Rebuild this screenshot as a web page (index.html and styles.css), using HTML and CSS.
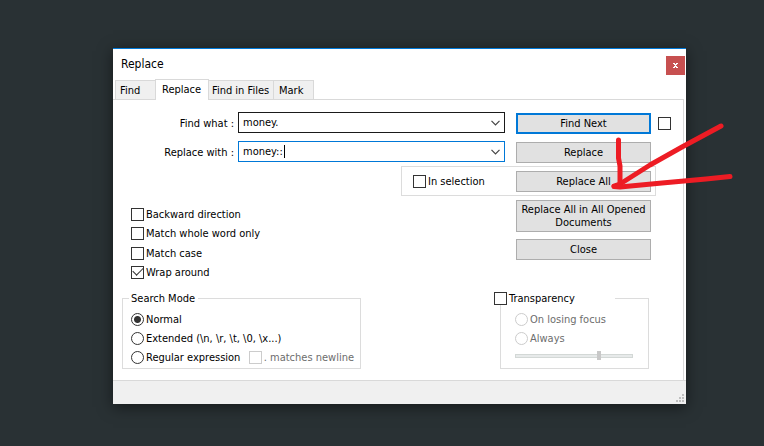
FILE: index.html
```html
<!DOCTYPE html>
<html lang="en">
<head>
    <meta charset="UTF-8">
    <meta name="viewport" content="width=device-width, initial-scale=1.0">
    <title>Replace</title>
    <link rel="stylesheet" href="styles.css">
</head>
<body>
    <main class="dialog">
        <header class="title-bar">
            <h1>Replace</h1>
            <button class="close-button" aria-label="Close window">
                <svg width="5" height="5" viewBox="0 0 5 5" fill="#fff"><path d="M0 0h2v1h1V0h2v1H4v1H3v1h1v1h1v1H3V4H2v1H0V4h1V3h1V2H1V1H0z"/></svg>
            </button>
        </header>

        <nav class="tabs">
            <button class="tab tab-find">Find</button>
            <button class="tab active">Replace</button>
            <button class="tab tab-files">Find in Files</button>
            <button class="tab tab-mark">Mark</button>
        </nav>

        <form class="panel">
            <div class="row">
                <label class="field-label" for="findWhat">Find what :</label>
                <div class="combo">
                    <input type="text" id="findWhat" value="money.">
                    <svg class="chevron" width="9" height="6" viewBox="0 0 9 6"><path d="M.5 .8L4.500 4.800L8.500 .8" fill="none" stroke="#444" stroke-width="1.200"/></svg>
                </div>
                <button type="button" class="button default">Find Next</button>
                <input type="checkbox" class="swap" aria-label="Two find buttons">
            </div>

            <div class="row">
                <label class="field-label" for="replaceWith">Replace with :</label>
                <div class="combo focused">
                    <input type="text" id="replaceWith" value="money::">
                    <span class="caret"></span>
                    <svg class="chevron" width="9" height="6" viewBox="0 0 9 6"><path d="M.5 .8L4.500 4.800L8.500 .8" fill="none" stroke="#444" stroke-width="1.200"/></svg>
                </div>
                <button type="button" class="button">Replace</button>
                <span class="swap"></span>
            </div>

            <div class="selection">
                <label class="option"><input type="checkbox">In selection</label>
                <button type="button" class="button">Replace All</button>
            </div>

            <div class="middle">
                <div class="options">
                    <label class="option"><input type="checkbox">Backward direction</label>
                    <label class="option"><input type="checkbox">Match whole word only</label>
                    <label class="option"><input type="checkbox">Match case</label>
                    <label class="option"><input type="checkbox" checked>Wrap around</label>
                </div>
                <div class="actions">
                    <button type="button" class="button tall">Replace All in All Opened Documents</button>
                    <button type="button" class="button">Close</button>
                </div>
            </div>

            <div class="groups">
                <fieldset class="group search-mode">
                    <legend>Search Mode</legend>
                    <label class="option"><input type="radio" name="mode" checked>Normal</label>
                    <label class="option"><input type="radio" name="mode">Extended (\n, \r, \t, \0, \x...)</label>
                    <div class="regex">
                        <label class="option"><input type="radio" name="mode">Regular expression</label>
                        <label class="option disabled"><input type="checkbox" disabled>. matches newline</label>
                    </div>
                </fieldset>

                <fieldset class="group transparency">
                    <legend><label class="option"><input type="checkbox">Transparency</label></legend>
                    <label class="option disabled"><input type="radio" name="transparency" disabled>On losing focus</label>
                    <label class="option disabled"><input type="radio" name="transparency" disabled>Always</label>
                    <input type="range" class="slider" min="0" max="100" value="72" disabled aria-label="Transparency level">
                </fieldset>
            </div>
        </form>

        <footer class="status-bar">
            <svg width="8" height="8" viewBox="0 0 8 8" fill="#bfbfbf"><path d="M6 0h2v2H6zM3 3h2v2H3zM6 3h2v2H6zM0 6h2v2H0zM3 6h2v2H3zM6 6h2v2H6z"/></svg>
        </footer>
    </main>

    <svg class="arrow" width="130" height="80" viewBox="0 0 130 80" fill="none" stroke="#ed1c24" stroke-width="5" stroke-linecap="round" stroke-linejoin="round">
        <path d="M18.500 20V38L20 46V66"/>
        <path d="M121 6L82 27L50 45L20 64L14 66"/>
        <path d="M130 56.500L106 59L62 63L20 67L14 66.500"/>
    </svg>
</body>
</html>
```
FILE: styles.css
```css
* {
    margin: 0;
    padding: 0;
    box-sizing: border-box;
}

body {
    font-family: "DejaVu Sans Condensed", Tahoma, "DejaVu Sans", sans-serif;
    font-size: 11px;
    line-height: 13px;
    color: #000;
    background: #293134;
    padding: 48px 78px 42px 113px;
    position: relative;
    overflow: hidden;
}

button,
input {
    font: inherit;
    color: inherit;
}

.dialog {
    background: #fff;
    border-top: 1px solid #0078d7;
    box-shadow: 0 3px 14px rgba(0, 0, 0, 0.5);
}

.title-bar {
    display: flex;
    justify-content: space-between;
    height: 30px;
    padding: 7px 1px 0 8px;
}

h1 {
    font-size: 12px;
    font-weight: normal;
    line-height: 16px;
}

.close-button {
    display: flex;
    align-items: center;
    justify-content: center;
    width: 19px;
    height: 19px;
    background: #c75050;
    border: none;
}

/* Tabs */
.tabs {
    display: flex;
    align-items: flex-end;
    padding-left: 2px;
}

.tab {
    height: 19px;
    padding: 0 4px;
    background: #f0f0f0;
    border: 1px solid #d9d9d9;
    border-left: none;
    border-bottom: none;
    white-space: nowrap;
    text-align: left;
}

.tab-find {
    width: 40px;
    border-left: 1px solid #d9d9d9;
    border-right: none;
}

.tab-files {
    width: 65px;
    padding: 0 3px;
}

.tab-mark {
    width: 40px;
    padding-left: 5px;
}

.tab.active {
    width: 54px;
    height: 21px;
    margin-bottom: -1px;
    padding: 0 6px 2px;
    background: #fff;
    border-left: 1px solid #d9d9d9;
    position: relative;
}

.panel {
    margin-right: 2px;
    padding: 12px 12px 11px 9px;
    border-top: 1px solid #d9d9d9;
    border-right: 1px solid #d9d9d9;
}

/* Find and replace fields */
.row {
    display: flex;
    align-items: center;
    height: 22px;
    margin-bottom: 7px;
}

.field-label {
    width: 116px;
    padding-right: 4px;
    text-align: right;
}

.combo {
    display: flex;
    align-items: center;
    align-self: flex-start;
    flex: 1;
    height: 21px;
    margin-right: 11px;
    padding: 0 4px;
    border: 1px solid #1a1a1a;
    position: relative;
}

.combo.focused {
    border-color: #0078d7;
}

.combo input {
    flex: 1;
    min-width: 0;
    height: 17px;
    border: none;
    outline: none;
    background: none;
}

.caret {
    position: absolute;
    left: 45px;
    top: 3px;
    width: 1px;
    height: 13px;
    background: #000;
}

.button {
    flex: none;
    width: 135px;
    height: 21px;
    padding: 0 4px;
    background: #e1e1e1;
    border: 1px solid #adadad;
}

.button.default {
    border: 2px solid #0078d7;
}

.button.tall {
    height: 32px;
}

.swap {
    width: 13px;
    margin-left: 7px;
}

/* Checkboxes and radios */
input[type="checkbox"],
input[type="radio"] {
    appearance: none;
    flex: none;
    width: 13px;
    height: 13px;
    background: #fff;
    border: 1px solid #333;
}

input[type="radio"] {
    border-radius: 50%;
}

input[type="radio"]:checked {
    background: radial-gradient(circle, #333 3px, #fff 4px);
}

input[type="checkbox"]:checked {
    display: flex;
    align-items: center;
    justify-content: center;
}

input[type="checkbox"]:checked::before {
    content: "";
    width: 9px;
    height: 5px;
    margin-bottom: 4px;
    border-left: 1px solid #333;
    border-bottom: 1px solid #333;
    transform: rotate(-45deg);
}

input[type="checkbox"]:disabled,
input[type="radio"]:disabled {
    border-color: #ccc;
}

.option {
    display: flex;
    align-items: center;
    gap: 2px;
    height: 13px;
    white-space: nowrap;
}

.disabled {
    color: #6d6d6d;
}

.selection {
    display: flex;
    align-items: center;
    justify-content: space-between;
    width: 255px;
    height: 30px;
    margin: -4px 15px 4px auto;
    padding: 0 4px 0 11px;
    border: 1px solid #dcdcdc;
}

.middle {
    display: flex;
    justify-content: space-between;
    padding: 0 20px 0 9px;
}

.options {
    display: flex;
    flex-direction: column;
    justify-content: space-between;
    height: 79px;
    padding-top: 8px;
}

.actions {
    display: flex;
    flex-direction: column;
    gap: 7px;
}

/* Group boxes */
.groups {
    display: flex;
    justify-content: space-between;
    align-items: flex-start;
    margin-top: 13px;
    padding-right: 22px;
}

.group {
    display: flex;
    flex-direction: column;
    gap: 6px;
    height: 77px;
    padding: 8px 6px 0 8px;
    border: 1px solid #dcdcdc;
}

.group legend {
    height: 13px;
    padding: 0 3px 0 2px;
}

.search-mode {
    width: 239px;
}

.search-mode legend {
    margin-left: -2px;
}

.regex {
    display: flex;
    justify-content: space-between;
}

.transparency {
    width: 149px;
    padding-left: 14px;
}

.transparency legend {
    width: 121px;
    margin-left: -21px;
    padding: 0;
    background: #fff;
}

.slider {
    appearance: none;
    width: 118px;
    height: 9px;
    background:
        linear-gradient(#e7eaea, #e7eaea) center / 116px 2px no-repeat,
        linear-gradient(#d3d8d6, #d3d8d6) center / 100% 4px no-repeat;
}

.slider::-webkit-slider-thumb {
    appearance: none;
    width: 4px;
    height: 9px;
    background: #c8c8c8;
}

.status-bar {
    display: flex;
    align-items: flex-end;
    justify-content: flex-end;
    height: 24px;
    padding: 0 2px 2px 0;
    background: #f0f0f0;
    border-top: 1px solid #d9d9d9;
}

/* Hand-drawn arrow over the dialog */
.arrow {
    position: absolute;
    left: 600px;
    top: 120px;
    overflow: visible;
}
```
